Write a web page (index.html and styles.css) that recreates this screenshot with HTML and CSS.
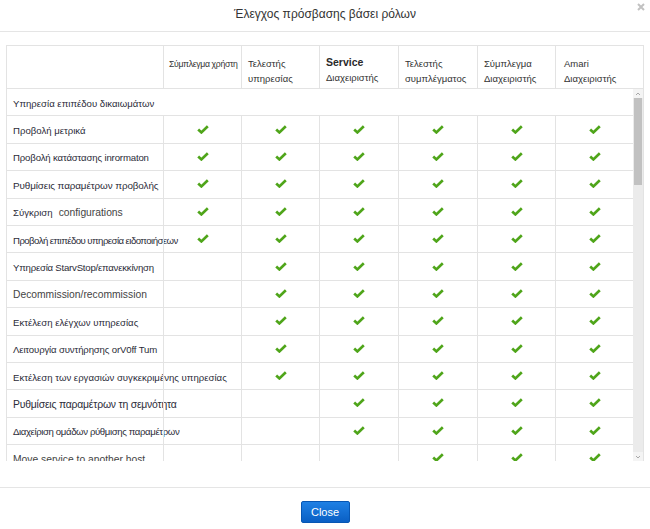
FILE: index.html
```html
<!DOCTYPE html>
<html lang="el">
<head>
<meta charset="utf-8">
<title>Έλεγχος πρόσβασης βάσει ρόλων</title>
<link rel="stylesheet" href="styles.css">
</head>
<body>
<div class="modal">
  <header class="modal-header">
    <span class="hdr-spacer"></span>
    <h4 class="title">Έλεγχος πρόσβασης βάσει ρόλων</h4>
    <span class="close-wrap"><svg class="close-x" viewBox="0 0 8 8"><path d="M1 1 L7 7 M7 1 L1 7"/></svg></span>
  </header>

  <div class="modal-body">
    <div class="matrix">
      <div class="thead">
        <div class="th th-first"></div>
        <div class="th th-tight"><span class="hl">Σύμπλεγμα χρήστη</span></div>
        <div class="th"><span class="hl">Τελεστής</span><span class="hl">υπηρεσίας</span></div>
        <div class="th"><span class="hl hl-bold">Service</span><span class="hl">Διαχειριστής</span></div>
        <div class="th"><span class="hl">Τελεστής</span><span class="hl">συμπλέγματος</span></div>
        <div class="th"><span class="hl">Σύμπλεγμα</span><span class="hl">Διαχειριστής</span></div>
        <div class="th th-last"><span class="hl">Amari</span><span class="hl">Διαχειριστής</span></div>
      </div>

      <div class="tbody-wrap">
        <div class="tbody">
          <div class="row row-section"><div class="cell label">Υπηρεσία επιπέδου δικαιωμάτων</div></div>

          <div class="row">
            <div class="cell label">Προβολή μετρικά</div>
            <div class="cell ok"><svg class="chk" viewBox="0 0 12 9"><path d="M1.2 4.4 L4.4 7.4 L10.8 1.3"/></svg></div>
            <div class="cell ok"><svg class="chk" viewBox="0 0 12 9"><path d="M1.2 4.4 L4.4 7.4 L10.8 1.3"/></svg></div>
            <div class="cell ok"><svg class="chk" viewBox="0 0 12 9"><path d="M1.2 4.4 L4.4 7.4 L10.8 1.3"/></svg></div>
            <div class="cell ok"><svg class="chk" viewBox="0 0 12 9"><path d="M1.2 4.4 L4.4 7.4 L10.8 1.3"/></svg></div>
            <div class="cell ok"><svg class="chk" viewBox="0 0 12 9"><path d="M1.2 4.4 L4.4 7.4 L10.8 1.3"/></svg></div>
            <div class="cell ok"><svg class="chk" viewBox="0 0 12 9"><path d="M1.2 4.4 L4.4 7.4 L10.8 1.3"/></svg></div>
          </div>

          <div class="row">
            <div class="cell label ls-1">Προβολή κατάστασης inrormaton</div>
            <div class="cell ok"><svg class="chk" viewBox="0 0 12 9"><path d="M1.2 4.4 L4.4 7.4 L10.8 1.3"/></svg></div>
            <div class="cell ok"><svg class="chk" viewBox="0 0 12 9"><path d="M1.2 4.4 L4.4 7.4 L10.8 1.3"/></svg></div>
            <div class="cell ok"><svg class="chk" viewBox="0 0 12 9"><path d="M1.2 4.4 L4.4 7.4 L10.8 1.3"/></svg></div>
            <div class="cell ok"><svg class="chk" viewBox="0 0 12 9"><path d="M1.2 4.4 L4.4 7.4 L10.8 1.3"/></svg></div>
            <div class="cell ok"><svg class="chk" viewBox="0 0 12 9"><path d="M1.2 4.4 L4.4 7.4 L10.8 1.3"/></svg></div>
            <div class="cell ok"><svg class="chk" viewBox="0 0 12 9"><path d="M1.2 4.4 L4.4 7.4 L10.8 1.3"/></svg></div>
          </div>

          <div class="row">
            <div class="cell label label-lg">Ρυθμίσεις παραμέτρων προβολής</div>
            <div class="cell ok"><svg class="chk" viewBox="0 0 12 9"><path d="M1.2 4.4 L4.4 7.4 L10.8 1.3"/></svg></div>
            <div class="cell ok"><svg class="chk" viewBox="0 0 12 9"><path d="M1.2 4.4 L4.4 7.4 L10.8 1.3"/></svg></div>
            <div class="cell ok"><svg class="chk" viewBox="0 0 12 9"><path d="M1.2 4.4 L4.4 7.4 L10.8 1.3"/></svg></div>
            <div class="cell ok"><svg class="chk" viewBox="0 0 12 9"><path d="M1.2 4.4 L4.4 7.4 L10.8 1.3"/></svg></div>
            <div class="cell ok"><svg class="chk" viewBox="0 0 12 9"><path d="M1.2 4.4 L4.4 7.4 L10.8 1.3"/></svg></div>
            <div class="cell ok"><svg class="chk" viewBox="0 0 12 9"><path d="M1.2 4.4 L4.4 7.4 L10.8 1.3"/></svg></div>
          </div>

          <div class="row">
            <div class="cell label">Σύγκριση <span class="en">configurations</span></div>
            <div class="cell ok"><svg class="chk" viewBox="0 0 12 9"><path d="M1.2 4.4 L4.4 7.4 L10.8 1.3"/></svg></div>
            <div class="cell ok"><svg class="chk" viewBox="0 0 12 9"><path d="M1.2 4.4 L4.4 7.4 L10.8 1.3"/></svg></div>
            <div class="cell ok"><svg class="chk" viewBox="0 0 12 9"><path d="M1.2 4.4 L4.4 7.4 L10.8 1.3"/></svg></div>
            <div class="cell ok"><svg class="chk" viewBox="0 0 12 9"><path d="M1.2 4.4 L4.4 7.4 L10.8 1.3"/></svg></div>
            <div class="cell ok"><svg class="chk" viewBox="0 0 12 9"><path d="M1.2 4.4 L4.4 7.4 L10.8 1.3"/></svg></div>
            <div class="cell ok"><svg class="chk" viewBox="0 0 12 9"><path d="M1.2 4.4 L4.4 7.4 L10.8 1.3"/></svg></div>
          </div>

          <div class="row">
            <div class="cell label ls-4">Προβολή επιπέδου υπηρεσία ειδοποιήσεων</div>
            <div class="cell ok"><svg class="chk" viewBox="0 0 12 9"><path d="M1.2 4.4 L4.4 7.4 L10.8 1.3"/></svg></div>
            <div class="cell ok"><svg class="chk" viewBox="0 0 12 9"><path d="M1.2 4.4 L4.4 7.4 L10.8 1.3"/></svg></div>
            <div class="cell ok"><svg class="chk" viewBox="0 0 12 9"><path d="M1.2 4.4 L4.4 7.4 L10.8 1.3"/></svg></div>
            <div class="cell ok"><svg class="chk" viewBox="0 0 12 9"><path d="M1.2 4.4 L4.4 7.4 L10.8 1.3"/></svg></div>
            <div class="cell ok"><svg class="chk" viewBox="0 0 12 9"><path d="M1.2 4.4 L4.4 7.4 L10.8 1.3"/></svg></div>
            <div class="cell ok"><svg class="chk" viewBox="0 0 12 9"><path d="M1.2 4.4 L4.4 7.4 L10.8 1.3"/></svg></div>
          </div>

          <div class="row">
            <div class="cell label ls-2">Υπηρεσία StarvStop/επανεκκίνηση</div>
            <div class="cell"></div>
            <div class="cell ok"><svg class="chk" viewBox="0 0 12 9"><path d="M1.2 4.4 L4.4 7.4 L10.8 1.3"/></svg></div>
            <div class="cell ok"><svg class="chk" viewBox="0 0 12 9"><path d="M1.2 4.4 L4.4 7.4 L10.8 1.3"/></svg></div>
            <div class="cell ok"><svg class="chk" viewBox="0 0 12 9"><path d="M1.2 4.4 L4.4 7.4 L10.8 1.3"/></svg></div>
            <div class="cell ok"><svg class="chk" viewBox="0 0 12 9"><path d="M1.2 4.4 L4.4 7.4 L10.8 1.3"/></svg></div>
            <div class="cell ok"><svg class="chk" viewBox="0 0 12 9"><path d="M1.2 4.4 L4.4 7.4 L10.8 1.3"/></svg></div>
          </div>

          <div class="row">
            <div class="cell label label-en">Decommission/recommission</div>
            <div class="cell"></div>
            <div class="cell ok"><svg class="chk" viewBox="0 0 12 9"><path d="M1.2 4.4 L4.4 7.4 L10.8 1.3"/></svg></div>
            <div class="cell ok"><svg class="chk" viewBox="0 0 12 9"><path d="M1.2 4.4 L4.4 7.4 L10.8 1.3"/></svg></div>
            <div class="cell ok"><svg class="chk" viewBox="0 0 12 9"><path d="M1.2 4.4 L4.4 7.4 L10.8 1.3"/></svg></div>
            <div class="cell ok"><svg class="chk" viewBox="0 0 12 9"><path d="M1.2 4.4 L4.4 7.4 L10.8 1.3"/></svg></div>
            <div class="cell ok"><svg class="chk" viewBox="0 0 12 9"><path d="M1.2 4.4 L4.4 7.4 L10.8 1.3"/></svg></div>
          </div>

          <div class="row">
            <div class="cell label">Εκτέλεση ελέγχων υπηρεσίας</div>
            <div class="cell"></div>
            <div class="cell ok"><svg class="chk" viewBox="0 0 12 9"><path d="M1.2 4.4 L4.4 7.4 L10.8 1.3"/></svg></div>
            <div class="cell ok"><svg class="chk" viewBox="0 0 12 9"><path d="M1.2 4.4 L4.4 7.4 L10.8 1.3"/></svg></div>
            <div class="cell ok"><svg class="chk" viewBox="0 0 12 9"><path d="M1.2 4.4 L4.4 7.4 L10.8 1.3"/></svg></div>
            <div class="cell ok"><svg class="chk" viewBox="0 0 12 9"><path d="M1.2 4.4 L4.4 7.4 L10.8 1.3"/></svg></div>
            <div class="cell ok"><svg class="chk" viewBox="0 0 12 9"><path d="M1.2 4.4 L4.4 7.4 L10.8 1.3"/></svg></div>
          </div>

          <div class="row">
            <div class="cell label ls-1">Λειτουργία συντήρησης orV0ff Tum</div>
            <div class="cell"></div>
            <div class="cell ok"><svg class="chk" viewBox="0 0 12 9"><path d="M1.2 4.4 L4.4 7.4 L10.8 1.3"/></svg></div>
            <div class="cell ok"><svg class="chk" viewBox="0 0 12 9"><path d="M1.2 4.4 L4.4 7.4 L10.8 1.3"/></svg></div>
            <div class="cell ok"><svg class="chk" viewBox="0 0 12 9"><path d="M1.2 4.4 L4.4 7.4 L10.8 1.3"/></svg></div>
            <div class="cell ok"><svg class="chk" viewBox="0 0 12 9"><path d="M1.2 4.4 L4.4 7.4 L10.8 1.3"/></svg></div>
            <div class="cell ok"><svg class="chk" viewBox="0 0 12 9"><path d="M1.2 4.4 L4.4 7.4 L10.8 1.3"/></svg></div>
          </div>

          <div class="row">
            <div class="cell label">Εκτέλεση των εργασιών συγκεκριμένης υπηρεσίας</div>
            <div class="cell"></div>
            <div class="cell ok"><svg class="chk" viewBox="0 0 12 9"><path d="M1.2 4.4 L4.4 7.4 L10.8 1.3"/></svg></div>
            <div class="cell ok"><svg class="chk" viewBox="0 0 12 9"><path d="M1.2 4.4 L4.4 7.4 L10.8 1.3"/></svg></div>
            <div class="cell ok"><svg class="chk" viewBox="0 0 12 9"><path d="M1.2 4.4 L4.4 7.4 L10.8 1.3"/></svg></div>
            <div class="cell ok"><svg class="chk" viewBox="0 0 12 9"><path d="M1.2 4.4 L4.4 7.4 L10.8 1.3"/></svg></div>
            <div class="cell ok"><svg class="chk" viewBox="0 0 12 9"><path d="M1.2 4.4 L4.4 7.4 L10.8 1.3"/></svg></div>
          </div>

          <div class="row">
            <div class="cell label label-xl">Ρυθμίσεις παραμέτρων τη σεμνότητα</div>
            <div class="cell"></div>
            <div class="cell"></div>
            <div class="cell ok"><svg class="chk" viewBox="0 0 12 9"><path d="M1.2 4.4 L4.4 7.4 L10.8 1.3"/></svg></div>
            <div class="cell ok"><svg class="chk" viewBox="0 0 12 9"><path d="M1.2 4.4 L4.4 7.4 L10.8 1.3"/></svg></div>
            <div class="cell ok"><svg class="chk" viewBox="0 0 12 9"><path d="M1.2 4.4 L4.4 7.4 L10.8 1.3"/></svg></div>
            <div class="cell ok"><svg class="chk" viewBox="0 0 12 9"><path d="M1.2 4.4 L4.4 7.4 L10.8 1.3"/></svg></div>
          </div>

          <div class="row">
            <div class="cell label ls-3">Διαχείριση ομάδων ρύθμισης παραμέτρων</div>
            <div class="cell"></div>
            <div class="cell"></div>
            <div class="cell ok"><svg class="chk" viewBox="0 0 12 9"><path d="M1.2 4.4 L4.4 7.4 L10.8 1.3"/></svg></div>
            <div class="cell ok"><svg class="chk" viewBox="0 0 12 9"><path d="M1.2 4.4 L4.4 7.4 L10.8 1.3"/></svg></div>
            <div class="cell ok"><svg class="chk" viewBox="0 0 12 9"><path d="M1.2 4.4 L4.4 7.4 L10.8 1.3"/></svg></div>
            <div class="cell ok"><svg class="chk" viewBox="0 0 12 9"><path d="M1.2 4.4 L4.4 7.4 L10.8 1.3"/></svg></div>
          </div>

          <div class="row">
            <div class="cell label label-en">Move service to another host</div>
            <div class="cell"></div>
            <div class="cell"></div>
            <div class="cell"></div>
            <div class="cell ok"><svg class="chk" viewBox="0 0 12 9"><path d="M1.2 4.4 L4.4 7.4 L10.8 1.3"/></svg></div>
            <div class="cell ok"><svg class="chk" viewBox="0 0 12 9"><path d="M1.2 4.4 L4.4 7.4 L10.8 1.3"/></svg></div>
            <div class="cell ok"><svg class="chk" viewBox="0 0 12 9"><path d="M1.2 4.4 L4.4 7.4 L10.8 1.3"/></svg></div>
          </div>
        </div>

        <div class="scrollbar">
          <span class="sb-btn"><svg class="sb-arrow" viewBox="0 0 6 4"><path d="M1 3 L3 1 L5 3"/></svg></span>
          <span class="sb-thumb"></span>
          <span class="sb-track"></span>
          <span class="sb-btn"><svg class="sb-arrow" viewBox="0 0 6 4"><path d="M1 1 L3 3 L5 1"/></svg></span>
        </div>
      </div>
    </div>
  </div>

  <footer class="modal-footer">
    <button class="btn-close" type="button">Close</button>
  </footer>
</div>
</body>
</html>
```

FILE: styles.css
```css
* { box-sizing: border-box; }

html, body {
  margin: 0;
  padding: 0;
  background: #ffffff;
  overflow: hidden;
}

body {
  font-family: "Liberation Sans", Arial, sans-serif;
  color: #333333;
}

.modal {
  width: 650px;
  background: #ffffff;
}

/* ---------- header ---------- */
.modal-header {
  display: grid;
  grid-template-columns: 1fr auto 1fr;
  align-items: start;
  height: 32px;
  border-bottom: 1px solid #e5e5e5;
}

.title {
  margin: 0;
  padding-top: 7px;
  font-size: 12px;
  line-height: 15px;
  font-weight: normal;
  color: #333333;
}

.close-wrap {
  justify-self: end;
  padding: 3px 5px 0 0;
  line-height: 0;
}

.close-x {
  width: 8px;
  height: 8px;
}

.close-x path {
  stroke: #c2c2c2;
  stroke-width: 2;
  fill: none;
}

/* ---------- body ---------- */
.modal-body {
  padding: 13px 6px 26px 6px;
}

.matrix {
  width: 638px;
}

.thead {
  display: grid;
  grid-template-columns: 157px 78px 78px 79px 79px 78px 89px;
  height: 44px;
  border-top: 1px solid #e3e3e3;
  border-bottom: 1px solid #e3e3e3;
}

.th {
  display: flex;
  flex-direction: column;
  padding: 10px 0 0 6px;
  border-left: 1px solid #e3e3e3;
  font-size: 9.5px;
  line-height: 15px;
  color: #333333;
  white-space: nowrap;
}

.th-tight {
  padding-top: 11px;
  padding-left: 5px;
  font-size: 8.7px;
  letter-spacing: -0.35px;
}

.th-last {
  border-right: 1px solid #e3e3e3;
  padding-left: 8px;
}

.hl-bold {
  font-weight: bold;
  font-size: 10.5px;
  line-height: 13px;
  margin-bottom: 1px;
  color: #2a2a2a;
}

.tbody-wrap {
  display: flex;
  height: 372px;
  overflow: hidden;
}

.tbody {
  width: 627px;
  flex: none;
}

.row {
  display: grid;
  grid-template-columns: 157px 78px 78px 79px 79px 78px 78px;
  height: 27.4px;
  border-bottom: 1px solid #e3e3e3;
}

.row-section {
  grid-template-columns: 1fr;
}

.cell {
  display: flex;
  align-items: center;
  border-left: 1px solid #e3e3e3;
}

.label {
  padding: 2px 0 0 6px;
  font-size: 9.6px;
  color: #2b2b38;
  white-space: nowrap;
}

.label-lg { font-size: 9.9px; letter-spacing: -0.1px; }
.label-xl { font-size: 10.4px; letter-spacing: -0.2px; }

.ls-1 { letter-spacing: -0.15px; }
.ls-2 { letter-spacing: -0.22px; }
.ls-3 { letter-spacing: -0.38px; }
.ls-4 { letter-spacing: -0.55px; }

.label-en,
.en {
  font-size: 10.3px;
  color: #444444;
}

.en { margin-left: 6px; }

.ok {
  justify-content: center;
}

.chk {
  width: 12px;
  height: 9px;
  margin-top: -1px;
}

.chk path {
  fill: none;
  stroke: #4fa51a;
  stroke-width: 2.7;
  stroke-linecap: butt;
  stroke-linejoin: miter;
}

/* ---------- fake scrollbar ---------- */
.scrollbar {
  display: flex;
  flex-direction: column;
  width: 11px;
  border-right: 1px solid #e3e3e3;
  background: #ebebeb;
}

.sb-btn {
  display: flex;
  align-items: center;
  justify-content: center;
  height: 9px;
  background: #f4f4f4;
}

.sb-arrow {
  width: 6px;
  height: 4px;
}

.sb-arrow path {
  fill: none;
  stroke: #a8a8a8;
  stroke-width: 1;
}

.sb-thumb {
  height: 87px;
  margin: 0 1px;
  background: #c1c1c1;
}

.sb-track {
  flex: 1;
}

/* ---------- footer ---------- */
.modal-footer {
  display: flex;
  justify-content: center;
  padding: 13px 0 14px;
  border-top: 1px solid #e5e5e5;
}

.btn-close {
  width: 49px;
  height: 22px;
  padding: 0;
  font-family: "Liberation Sans", Arial, sans-serif;
  font-size: 11px;
  color: #ffffff;
  background: linear-gradient(#1f80e4, #0a5fc4);
  border: 1px solid #0756b3;
  border-radius: 2px;
}
```
